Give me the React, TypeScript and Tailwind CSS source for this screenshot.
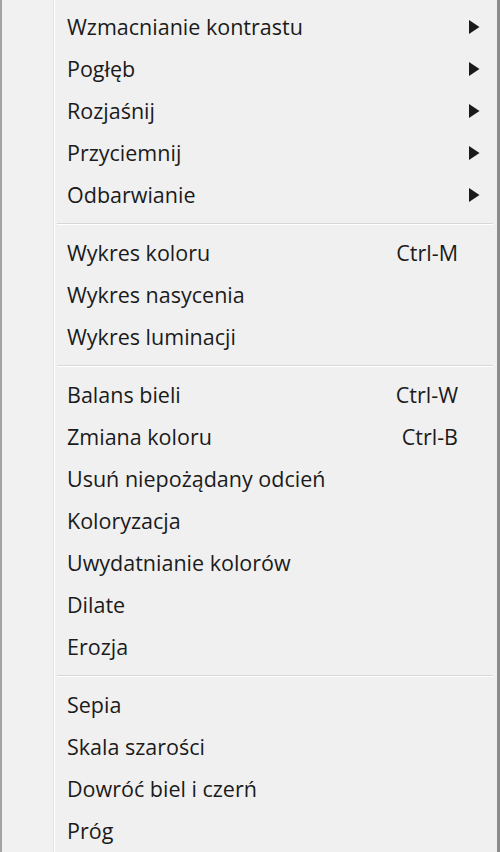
type Item = { label: string; shortcut?: string; sub?: boolean };

const groups: Item[][] = [
  [
    { label: "Wzmacnianie kontrastu", sub: true },
    { label: "Pogłęb", sub: true },
    { label: "Rozjaśnij", sub: true },
    { label: "Przyciemnij", sub: true },
    { label: "Odbarwianie", sub: true },
  ],
  [
    { label: "Wykres koloru", shortcut: "Ctrl-M" },
    { label: "Wykres nasycenia" },
    { label: "Wykres luminacji" },
  ],
  [
    { label: "Balans bieli", shortcut: "Ctrl-W" },
    { label: "Zmiana koloru", shortcut: "Ctrl-B" },
    { label: "Usuń niepożądany odcień" },
    { label: "Koloryzacja" },
    { label: "Uwydatnianie kolorów" },
    { label: "Dilate" },
    { label: "Erozja" },
  ],
  [
    { label: "Sepia" },
    { label: "Skala szarości" },
    { label: "Dowróć biel i czerń" },
    { label: "Próg" },
  ],
];

function Arrow() {
  return (
    <svg width="12" height="14" viewBox="0 0 12 14" className="block">
      <path d="M1 0 L11.5 7 L1 14 Z" fill="#1a1a1a" />
    </svg>
  );
}

function Row({ item }: { item: Item }) {
  return (
    <div className="flex h-[42px] items-center pl-[12px] pr-[17px]">
      <span className="flex-1 whitespace-nowrap">{item.label}</span>
      {item.shortcut && <span className="whitespace-nowrap">{item.shortcut}</span>}
      <span className="flex w-[22px] justify-end">{item.sub && <Arrow />}</span>
    </div>
  );
}

export default function App() {
  return (
    <div
      className="flex h-[852px] w-[500px] flex-col overflow-hidden bg-[#f0f0f0] text-[21.5px] leading-[30px] text-[#1b1b1b]"
      style={{ fontFamily: '"Open Sans", "Noto Sans", sans-serif' }}
    >
      <div className="h-[3px] bg-[#6f7a85]" />
      <div className="flex flex-1 border-l-[2px] border-r-[3px] border-l-[#a3a3a3] border-r-[#8c8c8c]">
        <div className="w-[51px] bg-[#f1f1f1]" />
        <div className="w-[1px] bg-[#e2e2e2]" />
        <div className="w-[1px] bg-[#ffffff]" />
        <div className="flex flex-1 flex-col pt-[6px]">
          {groups.map((g, gi) => (
            <div key={gi}>
              {gi > 0 && (
                <div className="flex h-[16px] flex-col justify-center pl-[2px] pr-[4px]">
                  <div className="h-[1px] bg-[#d7d7d7]" />
                  <div className="h-[1px] bg-[#ffffff]" />
                </div>
              )}
              {g.map((it) => (
                <Row key={it.label} item={it} />
              ))}
            </div>
          ))}
        </div>
      </div>
    </div>
  );
}
